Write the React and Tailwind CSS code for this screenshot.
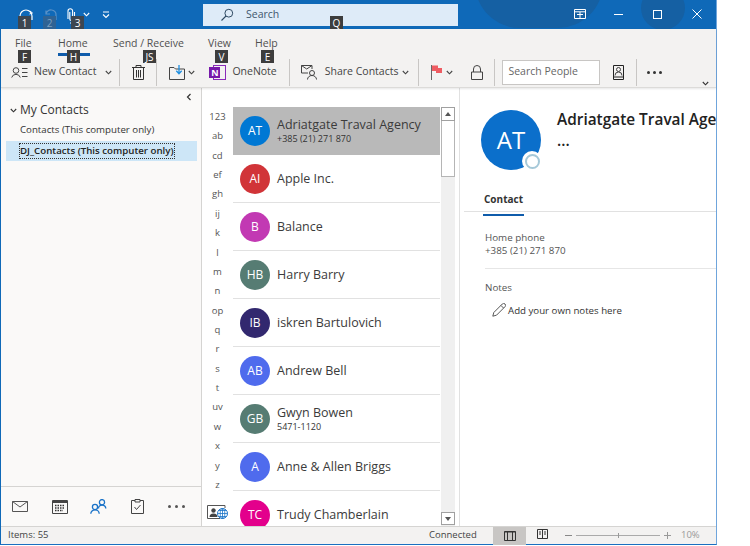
import React from 'react';

const FONT = { fontFamily: '"Open Sans", "Noto Sans", sans-serif' };

const LETTERS = ['123', 'ab', 'cd', 'ef', 'gh', 'ij', 'k', 'l', 'm', 'n', 'op', 'q', 'r', 's', 't', 'uv', 'w', 'x', 'y', 'z'];

const CONTACTS = [
  { initials: 'AT', name: 'Adriatgate Traval Agency', sub: '+385 (21) 271 870', color: 'bg-[#0078d4]', selected: true },
  { initials: 'AI', name: 'Apple Inc.', color: 'bg-[#d13438]' },
  { initials: 'B', name: 'Balance', color: 'bg-[#c239b3]' },
  { initials: 'HB', name: 'Harry Barry', color: 'bg-[#567c73]' },
  { initials: 'IB', name: 'iskren Bartulovich', color: 'bg-[#32286f]' },
  { initials: 'AB', name: 'Andrew Bell', color: 'bg-[#4f6bed]' },
  { initials: 'GB', name: 'Gwyn Bowen', sub: '5471-1120', color: 'bg-[#567c73]' },
  { initials: 'A', name: 'Anne & Allen Briggs', color: 'bg-[#4f6bed]' },
  { initials: 'TC', name: 'Trudy Chamberlain', color: 'bg-[#e3008c]' },
];

// dark Alt-key hint squares sitting over the ribbon
function KeyTip({ label, className }) {
  return (
    <div className={`absolute z-20 h-[13px] w-[13px] flex items-center justify-center text-[10px] leading-none ${className}`}>
      {label}
    </div>
  );
}

function Chevron({ className = '', color = '#444' }) {
  return (
    <svg width="7" height="5" viewBox="0 0 7 5" className={`shrink-0 ${className}`}>
      <path d="M0.8 1 L3.5 3.8 L6.2 1" fill="none" stroke={color} strokeWidth="1.1" />
    </svg>
  );
}

function Sep({ className = '' }) {
  return <div className={`w-px h-[27px] bg-[#c8c6c4] shrink-0 ${className}`} />;
}

function TitleBar() {
  return (
    <div className="relative h-[29px] shrink-0 bg-[#0f69b8] overflow-hidden flex items-center">
      {/* darker blobs of the Office title bar theme */}
      <div className="absolute left-[474px] -top-[62px] w-[128px] h-[90px] rounded-full bg-[#1560a3]" />
      <div className="absolute left-[640px] -top-[14px] w-[44px] h-[44px] rounded-full bg-[#1560a3]" />
      <div className="relative w-[202px] h-full shrink-0">
        <svg width="14" height="12" viewBox="0 0 14 12" className="absolute left-[18px] top-[9px]">
          <path d="M1 11 V7 A6 6 0 0 1 13 7 V11" fill="none" stroke="#fff" strokeWidth="1.2" />
          <path d="M11 2 L13.5 4 L10.5 5" fill="none" stroke="#fff" strokeWidth="1" />
        </svg>
        <svg width="14" height="12" viewBox="0 0 14 12" className="absolute left-[43px] top-[9px]">
          <path d="M2 5 A5 4.5 0 0 1 12 6 V11 M2 1.5 V5 H6" fill="none" stroke="#5b92c7" strokeWidth="1.2" />
        </svg>
        <svg width="11" height="17" viewBox="0 0 11 17" className="absolute left-[64px] top-[7px]">
          <path d="M3 12 V4 A2.3 2.3 0 0 1 7.6 4 V12 A1.4 1.4 0 0 1 4.8 12 V5 M9.5 5 V12.5 A3.5 3.5 0 0 1 6 16 H5" fill="none" stroke="#fff" strokeWidth="1.1" />
        </svg>
        <Chevron color="#fff" className="absolute left-[82px] top-[12px]" />
        <svg width="8" height="8" viewBox="0 0 8 8" className="absolute left-[101px] top-[11px]">
          <path d="M1 1 H7 M1 3.5 L4 6.5 L7 3.5" fill="none" stroke="#fff" strokeWidth="1.1" />
        </svg>
      </div>
      <div className="relative w-[255px] h-[22px] mt-[1px] bg-[#deebf8] flex items-center shrink-0">
        <svg width="14" height="14" viewBox="0 0 14 14" className="ml-[17px]">
          <circle cx="8.8" cy="5.2" r="3.9" fill="none" stroke="#2f4a63" strokeWidth="1" />
          <path d="M6 8 L1.5 12.5" stroke="#2f4a63" strokeWidth="1.1" />
        </svg>
        <span className="ml-[12px] text-[10.5px] text-[#40566d]">Search</span>
      </div>
      <svg width="12" height="10" viewBox="0 0 12 10" className="absolute left-[573px] top-[9px]">
        <path d="M0.5 0.5 H11.5 V9.5 H0.5 Z M0.5 2.8 H11.5 M3 5.5 H9 M6 3 V9" fill="none" stroke="#fff" strokeWidth="1" />
      </svg>
      <div className="absolute left-[613px] top-[14px] w-[9px] h-px bg-white" />
      <div className="absolute left-[652px] top-[10px] w-[9px] h-[9px] border border-white" />
      <svg width="10" height="10" viewBox="0 0 10 10" className="absolute left-[691px] top-[9px]">
        <path d="M0.5 0.5 L9.5 9.5 M9.5 0.5 L0.5 9.5" stroke="#fff" strokeWidth="1" />
      </svg>
    </div>
  );
}

function Ribbon() {
  return (
    <div className="relative h-[59px] shrink-0 bg-[#f3f2f1] border-b border-[#dcdbd9] text-[#444] shadow-[0_1px_2px_rgba(0,0,0,0.1)] z-10">
      <div className="flex h-[29px] items-center text-[10.5px] leading-none text-[#505050] pl-[14px] pb-[1px]">
        <span className="w-[43px]">File</span>
        <span className="relative w-[55px]">
          Home
          <span className="absolute left-0 top-[15px] w-[32px] h-[3px] bg-[#0f5cab]" />
        </span>
        <span className="w-[95px]">Send / Receive</span>
        <span className="w-[47px]">View</span>
        <span>Help</span>
      </div>
      <div className="flex items-center h-[30px] text-[10.5px] -mt-[1px] pl-[10px]">
        <svg width="17" height="11" viewBox="0 0 17 11" className="shrink-0">
          <circle cx="5" cy="3.5" r="2.8" fill="none" stroke="#444" strokeWidth="1" />
          <path d="M0.7 10.5 A4.5 4.5 0 0 1 9.3 10.5 M11 1.5 H16.5 M11 5.5 H16.5 M11 9.5 H16.5" fill="none" stroke="#444" strokeWidth="1" />
        </svg>
        <span className="ml-[6px] whitespace-nowrap">New Contact</span>
        <Chevron className="ml-[9px]" />
        <Sep className="ml-[7px]" />
        <svg width="13" height="15" viewBox="0 0 13 15" className="ml-[12px] shrink-0">
          <path d="M0 2.5 H13 M4 2.5 V0.5 H9 V2.5 M1.5 2.5 V14.5 H11.5 V2.5 M4.5 5 V12.5 M6.5 5 V12.5 M8.5 5 V12.5" fill="none" stroke="#333" strokeWidth="1" />
        </svg>
        <Sep className="ml-[11px]" />
        <svg width="16" height="15" viewBox="0 0 16 15" className="ml-[12px] shrink-0">
          <path d="M0.5 2.5 H5 L6.5 4 H15.5 V14.5 H0.5 Z" fill="none" stroke="#444" strokeWidth="1" />
          <path d="M10 0 V8.5 M7.3 5.8 L10 8.8 L12.7 5.8" fill="none" stroke="#1f8fe0" strokeWidth="1.3" />
        </svg>
        <Chevron className="ml-[3px]" />
        <div className="relative ml-[14px] w-[17px] h-[15px] shrink-0">
          <div className="absolute left-[4px] top-0 w-[13px] h-[15px] border border-[#8a2bb8]" />
          <div className="absolute left-0 top-[2px] w-[11px] h-[11px] bg-[#7719aa] text-white text-[9px] font-bold leading-[11px] text-center">N</div>
        </div>
        <span className="ml-[6px]">OneNote</span>
        <Sep className="ml-[12px]" />
        <svg width="16" height="15" viewBox="0 0 16 15" className="ml-[11px] shrink-0">
          <path d="M7 8 H0.5 V0.5 H11 V4 M0.5 0.5 L5.7 4 L11 0.5" fill="none" stroke="#444" strokeWidth="1" />
          <circle cx="11" cy="8" r="2.5" fill="none" stroke="#444" strokeWidth="1" />
          <path d="M6.5 14.5 A4.5 4 0 0 1 15.5 14.5" fill="none" stroke="#444" strokeWidth="1" />
        </svg>
        <span className="ml-[8px] whitespace-nowrap">Share Contacts</span>
        <Chevron className="ml-[4px]" />
        <Sep className="ml-[9px]" />
        <svg width="12" height="15" viewBox="0 0 12 15" className="ml-[12px] shrink-0">
          <path d="M0.5 0 V15" stroke="#666" strokeWidth="1" />
          <path d="M1 0.5 H7 V3 H11 V8 H5 V6 H1 Z" fill="#ee5c62" />
        </svg>
        <Chevron className="ml-[3px]" />
        <svg width="12" height="15" viewBox="0 0 12 15" className="ml-[18px] shrink-0">
          <path d="M2.5 7 V4 A3.5 3.5 0 0 1 9.5 4 V7 M0.5 7 H11.5 V14.5 H0.5 Z" fill="none" stroke="#444" strokeWidth="1" />
        </svg>
        <Sep className="ml-[11px]" />
        <div className="ml-[7px] w-[98px] h-[25px] bg-white border border-[#c8c6c4] flex items-center pl-[5px] text-[#666] shrink-0 whitespace-nowrap">
          Search People
        </div>
        <svg width="11" height="15" viewBox="0 0 11 15" className="ml-[13px] shrink-0">
          <path d="M0.5 0.5 H10.5 V14.5 H0.5 Z M0.5 12 H10.5" fill="none" stroke="#222" strokeWidth="1" />
          <circle cx="5.5" cy="4.5" r="2" fill="none" stroke="#444" strokeWidth="1" />
          <path d="M2 10.5 A3.5 3.5 0 0 1 9 10.5" fill="none" stroke="#444" strokeWidth="1" />
        </svg>
        <Sep className="ml-[12px]" />
        <div className="ml-[10px] flex gap-[3px]">
          <div className="w-[3px] h-[3px] rounded-full bg-[#333]" />
          <div className="w-[3px] h-[3px] rounded-full bg-[#333]" />
          <div className="w-[3px] h-[3px] rounded-full bg-[#333]" />
        </div>
      </div>
      <Chevron className="absolute right-[7px] bottom-[1px]" color="#333" />
    </div>
  );
}

function Sidebar() {
  return (
    <div className="relative w-[201px] shrink-0 bg-[#faf9f8] flex flex-col border-r border-[#d5d4d2]">
      <svg width="6" height="8" viewBox="0 0 6 8" className="absolute right-[9px] top-[5px]">
        <path d="M4.5 1 L1.5 4 L4.5 7" fill="none" stroke="#333" strokeWidth="1.2" />
      </svg>
      <div className="flex-1 pt-[13px]">
        <div className="flex items-center pl-[9px] h-[18px] text-[12px] text-[#333]">
          <Chevron className="mr-[3px]" color="#333" />
          My Contacts
        </div>
        <div className="pl-[19px] mt-[1px] h-[20px] flex items-center text-[9.7px] text-[#333] whitespace-nowrap">
          Contacts (This computer only)
        </div>
        <div className="ml-[5px] mr-[4px] h-[20px] mt-px bg-[#cde6f7] flex items-center pl-[14px] text-[9.7px] font-semibold text-[#222] whitespace-nowrap">
          <span className="border border-dotted border-[#333] -ml-px leading-[14px]">DJ_Contacts (This computer only)</span>
        </div>
      </div>
      <div className="h-[40px] border-t border-[#d5d4d2] flex items-center pl-[11px] shrink-0">
        <svg width="16" height="11" viewBox="0 0 16 11" className="shrink-0">
          <path d="M0.5 0.5 H15.5 V10.5 H0.5 Z M0.5 0.5 L8 6 L15.5 0.5" fill="none" stroke="#555" strokeWidth="1" />
        </svg>
        <svg width="16" height="15" viewBox="0 0 16 15" className="ml-[24px] shrink-0">
          <path d="M0.5 1.5 H15.5 V14.5 H0.5 Z" fill="none" stroke="#444" strokeWidth="1" />
          <path d="M0.5 3 H15.5" stroke="#444" strokeWidth="2" />
          <path d="M3 6.5 H13 M3 9 H13 M3 11.5 H11" stroke="#333" strokeWidth="1.3" strokeDasharray="1.5 1" />
        </svg>
        <svg width="17" height="15" viewBox="0 0 17 15" className="ml-[22px] shrink-0">
          <circle cx="12" cy="3.2" r="2.6" fill="none" stroke="#1a73c8" strokeWidth="1.3" />
          <path d="M8.5 9.5 A3.6 3.4 0 0 1 15.8 9.5" fill="none" stroke="#1a73c8" strokeWidth="1.3" />
          <circle cx="5" cy="8" r="2.6" fill="none" stroke="#1a73c8" strokeWidth="1.3" />
          <path d="M0.8 14.8 A4.2 4 0 0 1 9.2 14.8" fill="none" stroke="#1a73c8" strokeWidth="1.3" />
        </svg>
        <svg width="13" height="15" viewBox="0 0 13 15" className="ml-[24px] shrink-0">
          <path d="M4 1.5 H0.5 V14.5 H12.5 V1.5 H9 M4 0.5 H9 V3 H4 Z" fill="none" stroke="#444" strokeWidth="1" />
          <path d="M3.5 8 L5.5 10.5 L9.5 6" fill="none" stroke="#444" strokeWidth="1" />
        </svg>
        <div className="ml-[24px] flex gap-[4px]">
          <div className="w-[3px] h-[3px] rounded-full bg-[#555]" />
          <div className="w-[3px] h-[3px] rounded-full bg-[#555]" />
          <div className="w-[3px] h-[3px] rounded-full bg-[#555]" />
        </div>
      </div>
    </div>
  );
}

function AlphaBar() {
  return (
    <div className="w-[31px] shrink-0 flex flex-col items-center bg-white pt-[19.5px]">
      <div className="flex-1">
        {LETTERS.map((l) => (
          <div key={l} className="h-[19.37px] flex items-center justify-center text-[9.5px] text-[#555]">{l}</div>
        ))}
      </div>
      <svg width="22" height="14" viewBox="0 0 22 14" className="mb-[7px] shrink-0">
        <path d="M13 13.5 H0.5 V0.5 H18 V3" fill="none" stroke="#555" strokeWidth="1" />
        <circle cx="6.5" cy="5.5" r="2.2" fill="#444" />
        <path d="M2.5 12 A4 3.5 0 0 1 10.5 12 Z" fill="#444" />
        <circle cx="15.5" cy="8.5" r="5" fill="#fff" stroke="#1a73c8" strokeWidth="1" />
        <path d="M10.5 8.5 H20.5 M15.5 3.5 V13.5 M12 5.5 H19 M12 11.5 H19" stroke="#1a73c8" strokeWidth="0.8" />
        <ellipse cx="15.5" cy="8.5" rx="2.3" ry="5" fill="none" stroke="#1a73c8" strokeWidth="0.8" />
      </svg>
    </div>
  );
}

function ContactRow({ contact }) {
  const { initials, name, sub, color, selected } = contact;
  return (
    <div className={`h-[48px] shrink-0 flex items-center pl-[7px] border-b ${selected ? 'bg-[#b9b9b9] border-[#b9b9b9]' : 'border-[#e1e1e1]'}`}>
      <div className={`w-[30px] h-[30px] rounded-full shrink-0 flex items-center justify-center text-white text-[12px] ${color}`}>
        {initials}
      </div>
      <div className="ml-[7px] min-w-0">
        <div className="text-[12.5px] leading-[16px] text-[#3b3b3b] whitespace-nowrap">{name}</div>
        {sub && <div className="text-[9px] leading-[11px] text-[#333] whitespace-nowrap">{sub}</div>}
      </div>
    </div>
  );
}

function Scrollbar() {
  return (
    <div className="w-[14px] ml-[1px] shrink-0 bg-[#f0f0f0] flex flex-col">
      <div className="h-[14px] shrink-0 bg-white border border-[#a0a0a0] flex items-center justify-center">
        <div className="w-0 h-0 border-x-[3.5px] border-x-transparent border-b-[4px] border-b-[#555]" />
      </div>
      <div className="h-[56px] shrink-0 bg-white border border-[#b5b5b5] border-t-0" />
      <div className="flex-1" />
      <div className="h-[13px] mb-[1px] shrink-0 bg-white border border-[#a0a0a0] flex items-center justify-center">
        <div className="w-0 h-0 border-x-[3.5px] border-x-transparent border-t-[4px] border-t-[#555]" />
      </div>
    </div>
  );
}

function Details() {
  return (
    <div className="flex-1 min-w-0 overflow-hidden bg-white border-l border-[#e1e1e1] ml-[4px]">
      <div className="flex pl-[21px] pt-[22px] h-[97px]">
        <div className="relative w-[60px] h-[60px] rounded-full bg-[#0b6fcb] shrink-0 flex items-center justify-center text-white text-[24px]">
          AT
          <div className="absolute right-[-1px] bottom-[-1px] w-[20px] h-[20px] rounded-full bg-white flex items-center justify-center">
            <div className="w-[15px] h-[15px] rounded-full border-2 border-[#a5c8d8]" />
          </div>
        </div>
        <div className="ml-[16px] -mt-[1px] whitespace-nowrap">
          <div className="text-[15.4px] leading-[22px] font-semibold text-[#222]">Adriatgate Traval Agency</div>
          <div className="text-[15.4px] leading-[22px] font-semibold text-[#222] -mt-[1px]">...</div>
        </div>
      </div>
      <div className="ml-[4px] border-b border-[#e1e1e1] h-[27px] pl-[19px]">
        <div className="inline-flex h-[27px] items-start border-b-2 border-[#0f5cab] px-px pt-[3px] text-[10px] font-bold text-[#333]">
          Contact
        </div>
      </div>
      <div className="pl-[25px] pt-[19px] text-[9.8px] leading-[13px] text-[#555]">
        <div>Home phone</div>
        <div>+385 (21) 271 870</div>
        <div className="border-t border-[#e6e6e6] mt-[11px] pt-[12px]">Notes</div>
        <div className="flex items-center mt-[10px] ml-[7px] text-[9.7px] text-[#333]">
          <svg width="14" height="14" viewBox="0 0 14 14" className="shrink-0 -mt-[1px]">
            <path d="M0.8 13.2 L1.8 9.5 L10.3 1 A1.3 1.3 0 0 1 13 3.7 L4.5 12.2 Z M9 2.5 L11.5 5" fill="none" stroke="#444" strokeWidth="0.9" />
          </svg>
          <span className="ml-[2px]">Add your own notes here</span>
        </div>
      </div>
    </div>
  );
}

function StatusBar() {
  return (
    <div className="relative h-[18px] shrink-0 bg-[#f3f2f1] border-t border-[#d5d4d2] flex items-center text-[9.5px] text-[#444] pl-[7px]">
      <span>Items: 55</span>
      <span className="absolute left-[428px]">Connected</span>
      <div className="absolute left-[492px] top-0 w-[33px] h-[18px] bg-[#c8c6c4] flex items-center justify-center">
        <svg width="12" height="10" viewBox="0 0 12 10">
          <path d="M0.5 0.5 H11.5 V9.5 H0.5 Z M3.5 0.5 V9.5 M8.5 0.5 V9.5 M0.5 1 H11.5" fill="none" stroke="#333" strokeWidth="1" />
        </svg>
      </div>
      <svg width="11" height="10" viewBox="0 0 11 10" className="absolute left-[536px] top-[2px]">
        <path d="M0.5 0.5 H10.5 V9.5 H0.5 Z M5.5 0.5 V9.5 M2 3 H4 M2 5 H4 M7 3 H9 M7 5 H9" fill="none" stroke="#333" strokeWidth="1" />
      </svg>
      <div className="absolute left-[564px] top-[8px] w-[7px] h-px bg-[#888]" />
      <div className="absolute left-[575px] top-[8px] w-[84px] h-px bg-[#aaa]" />
      <div className="absolute left-[617px] top-[6px] w-px h-[5px] bg-[#999]" />
      <svg width="7" height="7" viewBox="0 0 7 7" className="absolute left-[663px] top-[5px]">
        <path d="M3.5 0 V7 M0 3.5 H7" stroke="#999" strokeWidth="1" />
      </svg>
      <span className="absolute left-[680px] text-[#999]">10%</span>
    </div>
  );
}

export default function App() {
  return (
    <div className="relative w-[750px] h-[546px] bg-white overflow-hidden" style={FONT}>
      <div className="w-[717px] h-[545px] flex flex-col border-r border-b border-l border-r-[#6fa5dc] border-b-[#1a6fc0] border-l-[#0f69b8]">
        <TitleBar />
        <Ribbon />
        <div className="flex-1 min-h-0 flex">
          <Sidebar />
          <AlphaBar />
          <div className="w-[207px] shrink-0 overflow-hidden flex flex-col pt-[19px]">
            {CONTACTS.map((c) => <ContactRow key={c.name} contact={c} />)}
          </div>
          <div className="flex pt-[19px]">
            <Scrollbar />
          </div>
          <Details />
        </div>
        <StatusBar />
      </div>
      <KeyTip label="1" className="left-[18px] top-[16px] bg-[#3d4650] text-white" />
      <KeyTip label="2" className="left-[43px] top-[16px] bg-[#2f6394] text-[#7fa0c0]" />
      <KeyTip label="3" className="left-[71px] top-[16px] bg-[#3d4650] text-white" />
      <KeyTip label="Q" className="left-[330px] top-[16px] bg-[#3d3d3d] text-white" />
      <KeyTip label="F" className="left-[18px] top-[50px] bg-[#3d3d3d] text-white" />
      <KeyTip label="H" className="left-[67px] top-[50px] bg-[#3d3d3d] text-white" />
      <KeyTip label="JS" className="left-[143px] top-[50px] bg-[#3d3d3d] text-white" />
      <KeyTip label="V" className="left-[215px] top-[50px] bg-[#3d3d3d] text-white" />
      <KeyTip label="E" className="left-[261px] top-[50px] bg-[#3d3d3d] text-white" />
    </div>
  );
}
